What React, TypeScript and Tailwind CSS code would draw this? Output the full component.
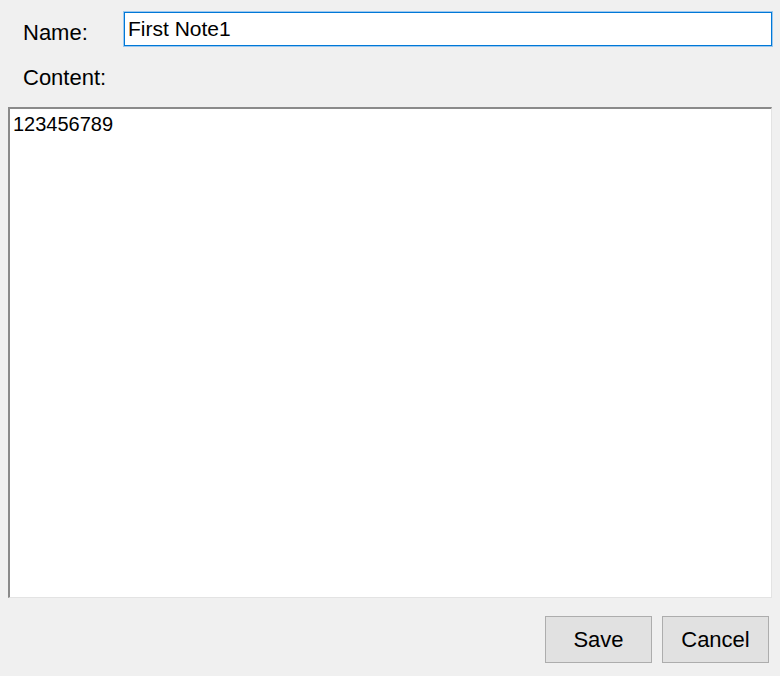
import { useState } from 'react'

/** Simple note editor dialog: name field, content area, save/cancel. */
export default function App() {
  const [name, setName] = useState('First Note1')
  const [content, setContent] = useState('123456789')

  return (
    <div
      className="flex h-[676px] w-[780px] flex-col bg-[#f0f0f0] text-black"
      style={{ fontFamily: '"Liberation Sans", Arial, sans-serif' }}
    >
      <div className="flex items-center pt-[12px]">
        <div className="w-[124px] shrink-0 pl-[23px] pt-[7px] text-[22px] leading-none">Name:</div>
        <input
          className="h-[34px] w-[648px] border border-[#0078d7] bg-white px-[3px] text-[21px] leading-none outline-none ring-1 ring-[#9cc8ef]"
          value={name}
          onChange={(e) => setName(e.target.value)}
        />
      </div>

      <div className="pl-[23px] pt-[21px] text-[22px] leading-none">Content:</div>

      <textarea
        className="ml-[8px] mt-[18px] h-[491px] w-[764px] resize-none border-t-2 border-l-2 border-r border-b border-t-[#8a8a8a] border-l-[#8a8a8a] border-r-[#e3e3e3] border-b-[#e3e3e3] bg-white px-[3px] py-[3px] text-[20px] leading-[24px] outline-none"
        value={content}
        onChange={(e) => setContent(e.target.value)}
      />

      <div className="flex justify-end gap-[10px] pr-[11px] pt-[18px]">
        <button className="h-[47px] w-[107px] border border-[#adadad] bg-[#e1e1e1] text-[22px]">Save</button>
        <button className="h-[47px] w-[107px] border border-[#adadad] bg-[#e1e1e1] text-[22px]">Cancel</button>
      </div>
    </div>
  )
}
